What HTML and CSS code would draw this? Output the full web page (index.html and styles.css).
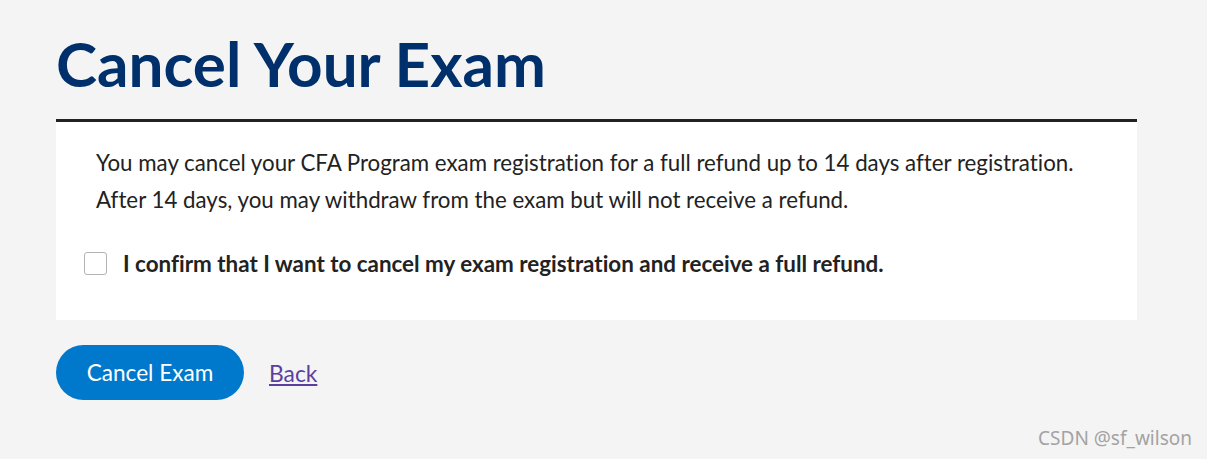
FILE: index.html
```html
<!DOCTYPE html>
<html lang="en">
<head>
<meta charset="utf-8">
<title>Cancel Your Exam</title>
<link rel="stylesheet" href="styles.css">
</head>
<body>
<main class="page">
  <h1 class="title">Cancel Your Exam</h1>
  <section class="card">
    <p class="intro">You may cancel your CFA Program exam registration for a full refund up to 14 days after registration.<br>After 14 days, you may withdraw from the exam but will not receive a refund.</p>
    <label class="confirm">
      <span class="box"></span>
      <span class="confirm-text">I confirm that I want to cancel my exam registration and receive a full refund.</span>
    </label>
  </section>
  <div class="actions">
    <button class="btn" type="button">Cancel Exam</button>
    <a class="back" href="#">Back</a>
  </div>
</main>
<div class="watermark">CSDN @sf_wilson</div>
</body>
</html>
```
FILE: styles.css
```css
html, body {
  margin: 0;
  padding: 0;
  background: #f4f4f4;
  font-family: Lato, "Open Sans", sans-serif;
  font-variant-ligatures: none;
  color: #222;
}
body {
  width: 1207px;
  height: 459px;
  position: relative;
  overflow: hidden;
}
.page {
  padding: 26px 0 0 56px;
  width: 1081px;
}
.title {
  margin: 0;
  font-size: 62px;
  line-height: 74px;
  font-weight: 700;
  color: #00306b;
}
.card {
  margin-top: 19px;
  background: #fff;
  border-top: 3px solid #222;
  padding: 22px 0 43px 28px;
}
.intro {
  margin: 0 0 0 12px;
  font-size: 22.3px;
  line-height: 37px;
  color: #222;
}
.confirm {
  display: flex;
  align-items: center;
  gap: 16px;
  margin-top: 32px;
}
.box {
  width: 21px;
  height: 21px;
  border: 1px solid #b3b3b3;
  border-radius: 3px;
  background: #fff;
  flex: none;
}
.confirm-text {
  font-size: 22.4px;
  font-weight: 700;
  color: #222;
}
.actions {
  display: flex;
  align-items: center;
  gap: 25px;
  margin-top: 25px;
}
.btn {
  width: 188px;
  height: 55px;
  border: none;
  border-radius: 28px;
  background: #0079cc;
  color: #fff;
  font-family: Lato, sans-serif;
  font-variant-ligatures: none;
  font-size: 22.6px;
  cursor: pointer;
}
.back {
  color: #5b3fa0;
  font-size: 22.8px;
  text-decoration: underline;
}
.watermark {
  position: absolute;
  right: 15px;
  top: 425px;
  font-family: "Noto Sans", "DejaVu Sans", sans-serif;
  font-size: 19px;
  color: #a3a3a3;
}
```
